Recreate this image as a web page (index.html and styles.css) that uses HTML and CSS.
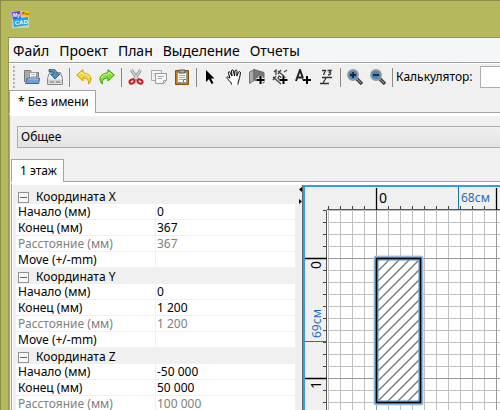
FILE: index.html
```html
<!DOCTYPE html>
<html lang="ru">
<head>
<meta charset="utf-8">
<title>Без имени</title>
<link rel="stylesheet" href="styles.css">
</head>
<body>
<div class="window">
<header class="titlebar">
<svg class="logo" width="17" height="17" viewBox="0 0 17 17" role="img" aria-label="MyProCAD">
<path d="M0 0h17v17H0z" fill="#c9d0ba"/><path d="M0 1l8-1 1 8-8 1z" fill="#5747d2"/><path d="M9 0h8v6l-8-1z" fill="#ffc20c"/><path d="M1 8l15-2v8L2 16z" fill="#18a4ea"/>
<text x="1" y="6" class="logo-small">My</text><text x="10" y="4" class="logo-pro">Pro</text><text x="3" y="14" class="logo-cad" transform="rotate(-5 3 14)">CAD</text>
</svg>
</header>
<div class="client">
<nav class="menubar"><a href="#">Файл</a><a href="#">Проект</a><a href="#">План</a><a href="#">Выделение</a><a href="#">Отчеты</a></nav>
<div class="toolbar">
<span class="grip"></span>
<button class="tool" aria-label="Открыть"><svg viewBox="0 0 16 16"><path d="M.5 13V1.500h6l1 2h7V8" fill="#a9aba9" stroke="#777"/><path d="M5.500 3.500h7v7h-7z" fill="#fafafa" stroke="#999"/><path d="M7 5.500h4M7 7.500h5" stroke="#bbb"/><path d="M3.500 9h12l-.8 5.500H1.500z" fill="#6d9ed5" stroke="#3465a4"/><path d="M4 10h10.500" stroke="#a9c8eb"/></svg></button>
<button class="tool" aria-label="Сохранить"><svg viewBox="0 0 16 16"><path d="M2.500 3.500h11l2 6v6H.5v-6z" fill="#eee" stroke="#888"/><path d="M1 10.500h14v4H1z" fill="#d0d2d0"/><path d="M3 13h4M10 12v2m2-2v2" stroke="#777"/><path d="M2 .5c5-1 8 .5 8 4.500h3L8 10 3.500 5H7C7 3 5 2 2 2.500z" fill="#5b8fbe" stroke="#265d8a"/></svg></button>
<span class="sep"></span>
<button class="tool" aria-label="Отменить"><svg viewBox="0 0 16 16"><path d="M.7 6L7 .7V4c5 0 8 3 8 6 0 2-1 4-2.500 5 .5-4-1-6-5.500-6v3z" fill="#f1d634" stroke="#c4a000"/><path d="M2.500 6L6 3v2c4 0 7 1 7.500 4" fill="none" stroke="#fff19a"/></svg></button>
<button class="tool" aria-label="Повторить"><svg viewBox="0 0 16 16"><path d="M15.300 6L9 .7V4c-5 0-8 3-8 6 0 2 1 4 2.500 5C3 11 4.500 9 9 9v3z" fill="#83e22b" stroke="#359906"/><path d="M13.500 6L10 3v2C6 5 3 6 2.500 9" fill="none" stroke="#c4ff88"/></svg></button>
<span class="sep"></span>
<button class="tool" aria-label="Вырезать"><svg viewBox="0 0 16 16"><path d="M3.500 1L10 11M12.500 1L6 11" stroke="#777" stroke-width="3"/><path d="M3.500 1L10 11M12.500 1L6 11" stroke="#ddd" stroke-width="1.400"/><ellipse cx="4" cy="12.500" rx="2.600" ry="2" fill="none" stroke="#d3171e" stroke-width="2" transform="rotate(-30 4 12.500)"/><ellipse cx="12" cy="12.500" rx="2.600" ry="2" fill="none" stroke="#d3171e" stroke-width="2" transform="rotate(30 12 12.500)"/></svg></button>
<button class="tool" aria-label="Копировать"><svg viewBox="0 0 16 16"><path d="M.5 1.500h10v10H.5z" fill="#f4f4f4" stroke="#aaa"/><path d="M2 4.500h7M2 6.500h3" stroke="#ccc"/><path d="M4.500 4.500h11v7l-3 3h-8z" fill="#f8f8f8" stroke="#999"/><path d="M7 7.500h6M7 9.500h4M12.500 14v-2.500H15" fill="none" stroke="#aaa"/></svg></button>
<button class="tool" aria-label="Вставить"><svg viewBox="0 0 16 16"><path d="M1.500 1.500h13v14h-13z" fill="#bd7d19" stroke="#855007"/><path d="M3.500 3.500h9v10h-9z" fill="#f6f6f3" stroke="#999"/><path d="M5 1h6v3H5z" fill="#aaa" stroke="#555"/><path d="M5 6.500h6M5 8.500h6M5 10.500h4" stroke="#aaa"/><path d="M9.500 13v-2.500H12" fill="none" stroke="#777"/></svg></button>
<span class="sep"></span>
<button class="tool" aria-label="Выбор"><svg viewBox="0 0 16 16"><path d="M3 1l8.500 8.500H8L10.500 14 8.500 15 6 10l-3 3z"/></svg></button>
<button class="tool" aria-label="Панорама"><svg viewBox="0 0 16 16"><path d="M5.500 15.500c0-2-2-3.500-3.500-5C.5 9 .5 8 1.500 7.800 2.500 8 3 9 4 9L2.500 4.500c-.5-2 1-2.500 1.500-1L6 7 5.500 2c0-1.500 2-1.500 2 0L8.500 7l.5-5c.3-1.500 2-1.200 2 .3L10.800 7l1.500-3.500c.7-1.500 2.400-1 2.100.5-.5 4-1 5-1.500 7-.3 1.500-1 2.500-1 4.500" fill="#fff" stroke="#000"/></svg></button>
<button class="tool" aria-label="Создать стены"><svg viewBox="0 0 16 16"><path d="M.5 3L5 .5v11l-4.500 3z" fill="#aaa" stroke="#777"/><path d="M5 .5l10 3V14L5 11z" fill="#777" stroke="#666"/><path d="M11.500 7v8M7.500 11h8" stroke="#f0f0f0" stroke-width="4"/><path d="M11.500 7v8M7.500 11h8" stroke="#000" stroke-width="2"/></svg></button>
<button class="tool" aria-label="Создать размеры"><svg viewBox="0 0 16 16"><path d="M1 8l8 7M6 2l8 7M1 11l3-4M6 5l3-4M12 3l3-2M2 3l2-2v5M6 9l1-2 2 1-1 3z" fill="none" stroke="#444" stroke-width="1.300"/><path d="M11.500 7v8M7.500 11h8" stroke="#f0f0f0" stroke-width="4"/><path d="M11.500 7v8M7.500 11h8" stroke="#000" stroke-width="2"/></svg></button>
<button class="tool" aria-label="Добавить текст"><svg viewBox="0 0 16 16"><path d="M1 12L5 1l4 11M2.500 8.500h5" fill="none" stroke="#222" stroke-width="2"/><path d="M12 7v8M8 11h8" stroke="#f0f0f0" stroke-width="4"/><path d="M12 7v8M8 11h8" stroke="#000" stroke-width="2"/></svg></button>
<button class="tool" aria-label="Отметка высоты"><svg viewBox="0 0 16 16"><path d="M4 1.500h3.500L5.500 6M9.500 1.500H13L11.500 3.500c2 0 1.500 2.500-1.500 2.500M4 8.500h10M8 9l-3 5M2 14.500h9" fill="none" stroke="#333" stroke-width="1.300"/></svg></button>
<span class="sep"></span>
<button class="tool" aria-label="Увеличить"><svg viewBox="0 0 16 16"><path d="M9 9l6 6" stroke="#444" stroke-width="3.500"/><path d="M10 10l4 4" stroke="#999"/><circle cx="6" cy="6" r="5" fill="#4d83c6" stroke="#929a94" stroke-width="1.800"/><path d="M3 6h6M6 3v6" stroke="#14283d" stroke-width="1.800"/></svg></button>
<button class="tool" aria-label="Уменьшить"><svg viewBox="0 0 16 16"><path d="M9 9l6 6" stroke="#444" stroke-width="3.500"/><path d="M10 10l4 4" stroke="#999"/><circle cx="6" cy="6" r="5" fill="#4d83c6" stroke="#929a94" stroke-width="1.800"/><path d="M3 6h6" stroke="#14283d" stroke-width="1.800"/></svg></button>
<span class="sep"></span>
<label for="calc">Калькулятор:</label><input id="calc" class="calc" type="text">
</div>
<div class="tabs"><button class="tab">* Без имени</button></div>
<main class="document">
<div class="filter"><select class="category" aria-label="Категория"><option>Общее</option></select></div>
<div class="tabs"><button class="tab">1 этаж</button></div>
<div class="workspace">
<section class="properties">
<table>
<colgroup><col class="name-col"><col></colgroup>
<tbody>
<tr><th colspan="2"><button class="toggle" aria-label="Свернуть"></button>Координата X</th></tr>
<tr><td>Начало (мм)</td><td>0</td></tr><tr><td>Конец (мм)</td><td>367</td></tr><tr class="readonly"><td>Расстояние (мм)</td><td>367</td></tr><tr><td>Move (+/-mm)</td><td></td></tr>
</tbody>
<tbody>
<tr><th colspan="2"><button class="toggle" aria-label="Свернуть"></button>Координата Y</th></tr>
<tr><td>Начало (мм)</td><td>0</td></tr><tr><td>Конец (мм)</td><td>1 200</td></tr><tr class="readonly"><td>Расстояние (мм)</td><td>1 200</td></tr><tr><td>Move (+/-mm)</td><td></td></tr>
</tbody>
<tbody>
<tr><th colspan="2"><button class="toggle" aria-label="Свернуть"></button>Координата Z</th></tr>
<tr><td>Начало (мм)</td><td>-50 000</td></tr><tr><td>Конец (мм)</td><td>50 000</td></tr><tr class="readonly"><td>Расстояние (мм)</td><td>100 000</td></tr>
</tbody>
</table>
</section>
<div class="splitter"><svg width="4" height="20" viewBox="0 0 4 20"><path d="M3 2v5L0 4.500zM0 14v5l3-2.500z"/></svg></div>
<section class="plan">
<svg width="100%" height="100%" aria-label="План">
<defs>
<pattern id="minor" x="23" y="23" width="12" height="12" patternUnits="userSpaceOnUse"><path d="M.5 0v12M0 .5h12" stroke="#c0c0c0"/></pattern>
<pattern id="major" x="71" y="71" width="120" height="120" patternUnits="userSpaceOnUse"><path d="M.5 0v120M0 .5h120" stroke="#989898"/></pattern>
<pattern id="hticks" x="23" y="19" width="12" height="5" patternUnits="userSpaceOnUse"><path d="M.5 0v5" stroke="#444"/></pattern>
<pattern id="vticks" x="18" y="23" width="5" height="12" patternUnits="userSpaceOnUse"><path d="M0 .5h5" stroke="#444"/></pattern>
<pattern id="hatch" x="72" y="75" width="10" height="10" patternUnits="userSpaceOnUse"><path d="M-2 12L12-2M-2 2L2-2M8 12l4-4" stroke="#777" stroke-width="1.400"/></pattern>
</defs>
<rect x="22" y="22" width="100%" height="100%" fill="#fff"/>
<rect x="23" y="23" width="100%" height="100%" fill="url(#minor)"/>
<rect x="23" y="23" width="100%" height="100%" fill="url(#major)"/>
<rect x="23" y="19" width="100%" height="4" fill="url(#hticks)"/>
<rect x="18" y="23" width="4" height="100%" fill="url(#vticks)"/>
<rect x="22" y="22" width="100%" height="1" fill="#555"/><rect x="21" y="23" width="1" height="100%" fill="#555"/>
<path d="M71.500 1v22M191.500 1v22M0 71.500h22M0 191.500h22" stroke="#000" stroke-width="1.300"/>
<path d="M153.500 0v22M0 154.500h22" stroke="#1c6fbd"/>
<text class="scale" x="74" y="16">0</text><text class="measure" x="156" y="15">68см</text>
<text class="scale" transform="translate(16 82) rotate(-90)">0</text><text class="scale" transform="translate(16 202) rotate(-90)">1</text><text class="measure" transform="translate(16 151) rotate(-90)">69см</text>
<rect x="71" y="71" width="45" height="145" fill="#fff" stroke="#a9caea" stroke-width="5" stroke-linejoin="round"/>
<rect x="72" y="72" width="43" height="143" fill="url(#hatch)"/>
<rect x="71.500" y="71.500" width="44" height="144" fill="none" stroke="#79a8d6" stroke-width="4"/>
<rect x="71.500" y="71.500" width="44" height="144" fill="none" stroke="#000" stroke-width="1.600"/>
</svg>
</section>
</div>
</main>
</div>
</div>
</body>
</html>
```
FILE: styles.css
```css
* { box-sizing: border-box; }
body {
  margin: 0;
  height: 100vh;
  overflow: hidden;
  font: 12px/16px "Noto Sans", sans-serif;
  color: #000;
}
button, input, select { font: inherit; color: inherit; border-radius: 0; }
.window {
  display: flex;
  flex-direction: column;
  height: 100vh;
  background: #b5b95c;
  border-top: 1px solid #898c46;
  border-left: 1px solid #898c46;
  padding-left: 7px;
}
.titlebar { height: 36px; flex: none; padding: 10px 4px; }
.logo { display: block; }
.logo text { font-family: "Liberation Sans", sans-serif; font-weight: bold; }
.logo .logo-small { font-size: 5px; fill: #fff; }
.logo .logo-pro { font-size: 4px; fill: #654a18; }
.logo .logo-cad { font-size: 6px; fill: #fff; }
.client {
  display: flex;
  flex-direction: column;
  flex: 1;
  min-height: 0;
  border-left: 1px solid #969850;
  border-top: 1px solid #969850;
  background: #f0f0f0;
}
.menubar {
  display: flex;
  gap: 10px;
  height: 25px;
  flex: none;
  padding: 0 4px;
  background: #f5f6f8;
  border-bottom: 1px solid #a0a0a0;
  font-size: 14px;
  line-height: 26px;
}
.menubar a { color: inherit; text-decoration: none; }
.toolbar {
  display: flex;
  align-items: center;
  height: 27px;
  flex: none;
  border-top: 1px solid #fff;
  overflow: hidden;
  white-space: nowrap;
}
.grip {
  width: 2px;
  height: 22px;
  margin: 0 6px 0 4px;
  flex: none;
  background: repeating-linear-gradient(#b0b0b0 0 2px, transparent 2px 4px);
}
.tool {
  width: 23px;
  height: 24px;
  padding: 4px 3px;
  border: 0;
  background: none;
  flex: none;
}
.tool svg { display: block; width: 16px; height: 16px; fill: #000; }
.sep { width: 1px; height: 19px; margin: 0 3px 0 2px; flex: none; background: #888; }
.calc {
  flex: 1;
  min-width: 20px;
  height: 22px;
  margin-left: 7px;
  border: 1px solid #abadb3;
  border-right: 0;
  background: #fff;
}
.tabs { display: flex; height: 23px; flex: none; }
.tabs::after { content: ""; flex: 1; border-bottom: 1px solid #a5a5a8; }
.tab {
  padding: 0 6px 0 8px;
  border: 1px solid #a5a5a8;
  border-bottom: 0;
  background: #fff;
}
.document {
  display: flex;
  flex-direction: column;
  flex: 1;
  min-height: 0;
  border-left: 1px solid #a5a5a8;
  border-top: 3px solid #fff;
  padding-left: 1px;
}
.filter { padding: 10px 0 11px 6px; }
.category {
  appearance: none;
  display: block;
  width: 100%;
  height: 22px;
  padding: 0 3px;
  border: 1px solid #a9abaf;
  border-right: 0;
  background: linear-gradient(#efefef, #e3e3e3);
}
.workspace {
  display: flex;
  flex: 1;
  min-height: 0;
  border-left: 1px solid #a5a5a8;
  border-top: 3px solid #fff;
  padding-left: 1px;
  background: #fff;
}
.properties { width: 286px; flex: none; padding: 3px 4px 0 3px; background: #f0f0f0; overflow: hidden; }
table { width: 100%; table-layout: fixed; border-collapse: separate; border-spacing: 0; background: #fff; }
.name-col { width: 140px; }
td, th { height: 16px; padding: 0 2px; line-height: 15px; white-space: nowrap; font-weight: normal; text-align: left; }
td { border-bottom: 1px solid #f0f0f0; }
td:first-child { border-right: 1px solid #f0f0f0; }
td + td { padding-left: 1px; }
th { background: #f0f0f0; }
.readonly { color: #808080; }
.toggle {
  width: 11px;
  height: 11px;
  margin-right: 7px;
  padding: 0;
  border: 1px solid #929292;
  background: linear-gradient(#4b63a7, #4b63a7) center / 7px 1px no-repeat #fafafa;
  vertical-align: -1px;
}
.splitter { width: 4px; flex: none; background: #f0f0f0; }
.splitter svg { display: block; }
.plan {
  flex: 1;
  min-width: 0;
  background: #f0f0f0;
  border-top: 2px solid #3399ff;
  border-left: 2px solid #3399ff;
  box-shadow: -1px 0 #666;
}
.plan svg { display: block; }
.scale { font-size: 14px; }
.measure { font-size: 12px; fill: #1c6fbd; }
```
